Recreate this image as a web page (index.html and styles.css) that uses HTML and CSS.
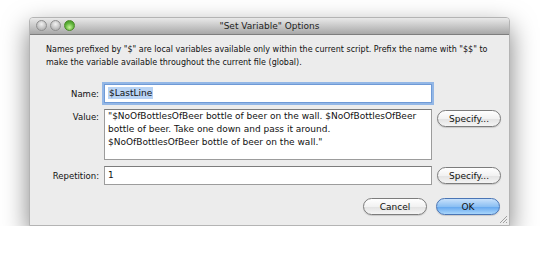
FILE: index.html
```html
<!DOCTYPE html>
<html lang="en">
<head>
    <meta charset="UTF-8">
    <title>"Set Variable" Options</title>
    <link rel="stylesheet" href="styles.css">
</head>
<body>
    <div class="window">
        <div class="titlebar">
            <div class="lights">
                <span class="light close"></span>
                <span class="light minimize"></span>
                <span class="light zoom"></span>
            </div>
            <div class="title">"Set Variable" Options</div>
        </div>

        <div class="content">
            <p class="intro">Names prefixed by "$" are local variables available only within the current script. Prefix the name with "$$" to make the variable available throughout the current file (global).</p>

            <div class="form">
                <label class="label" for="name">Name:</label>
                <div class="field focused" id="name"><span class="selected">$LastLine</span></div>
                <div></div>

                <label class="label top" for="value">Value:</label>
                <div class="field area" id="value">"$NoOfBottlesOfBeer bottle of beer on the wall. $NoOfBottlesOfBeer<br>bottle of beer. Take one down and pass it around.<br>$NoOfBottlesOfBeer bottle of beer on the wall."</div>
                <button class="btn top">Specify...</button>

                <label class="label" for="repetition">Repetition:</label>
                <div class="field" id="repetition">1</div>
                <button class="btn">Specify...</button>
            </div>

            <div class="actions">
                <button class="btn">Cancel</button>
                <button class="btn default">OK</button>
            </div>
        </div>

        <svg class="grip" width="9" height="9" viewBox="0 0 9 9">
            <path d="M8 1 L1 8 M8 4 L4 8 M8 7 L7 8" stroke="#a0a0a0" stroke-width="1"/>
        </svg>
    </div>
</body>
</html>
```

FILE: styles.css
```css
body {
    margin: 0;
    background: #ffffff;
    font-family: "DejaVu Sans", Verdana, sans-serif;
    font-size: 8px;
    color: #111;
}
.window {
    position: relative;
    box-sizing: border-box;
    width: 481px;
    height: 209px;
    margin: 17px 0 0 29px;
    background: #ececec;
    border: 1px solid #b4b4b4;
    border-radius: 4px 4px 0 0;
    box-shadow: 0 10px 26px rgba(0, 0, 0, 0.5);
}
.titlebar {
    position: relative;
    height: 16px;
    background: linear-gradient(#e9e9e9, #a8a8a8);
    border-bottom: 1px solid #7e7e7e;
    border-radius: 3px 3px 0 0;
    display: flex;
    align-items: center;
    justify-content: center;
}
.lights {
    position: absolute;
    left: 6px;
    top: 2px;
    display: flex;
    gap: 3px;
}
.light {
    width: 11px;
    height: 11px;
    border-radius: 50%;
    box-sizing: border-box;
    border: 1px solid #8f8f8f;
    background: radial-gradient(circle at 50% 35%, #f2f2f2, #b9b9b9 70%);
}
.light.zoom {
    border-color: #4d8a2a;
    background: radial-gradient(circle at 50% 70%, #c8f59a, #5fb43a 55%, #3d8c22);
}
.title {
    font-size: 9px;
    color: #222;
}
.content {
    padding: 8px 9px 0 16px;
}
.intro {
    margin: 0;
    line-height: 13px;
}
.form {
    display: grid;
    grid-template-columns: 53px 328px 64px;
    column-gap: 5px;
    row-gap: 6px;
    align-items: center;
    margin-top: 15px;
}
.label {
    text-align: right;
    font-size: 8.5px;
}
.label.top,
.btn.top {
    align-self: start;
}
.label.top {
    padding-top: 3px;
}
.btn.top {
    margin-top: 1px;
}
.field {
    box-sizing: border-box;
    height: 19px;
    padding: 0 3px;
    font-size: 9px;
    line-height: 17px;
    background: #fff;
    border: 1px solid #9c9c9c;
    border-top-color: #7c7c7c;
    white-space: nowrap;
    overflow: hidden;
}
.field.focused {
    border-color: #6f9ad6;
    box-shadow: 0 0 0 2px #93b7e6;
}
.selected {
    background: #b8d3f4;
    padding: 1px 1px;
}
.field.area {
    height: 51px;
    padding: 0 2px 0 3px;
    line-height: 13px;
}
.btn {
    box-sizing: border-box;
    height: 17px;
    padding: 0;
    font-family: inherit;
    font-size: 9px;
    color: #111;
    background: linear-gradient(#ffffff, #f2f2f2 50%, #e2e2e2 51%, #f4f4f4);
    border: 1px solid #7c7c7c;
    border-radius: 9px;
    box-shadow: 0 1px 1px rgba(0, 0, 0, 0.15);
}
.actions {
    display: flex;
    justify-content: flex-end;
    gap: 9px;
    margin-top: 13px;
}
.actions .btn {
    width: 64px;
}
.btn.default {
    border-color: #4a75b5;
    background: linear-gradient(#c8e1fb, #8cc0f3 50%, #62a5ee 51%, #a9d6fb);
}
.grip {
    position: absolute;
    right: 1px;
    bottom: 1px;
}
```
